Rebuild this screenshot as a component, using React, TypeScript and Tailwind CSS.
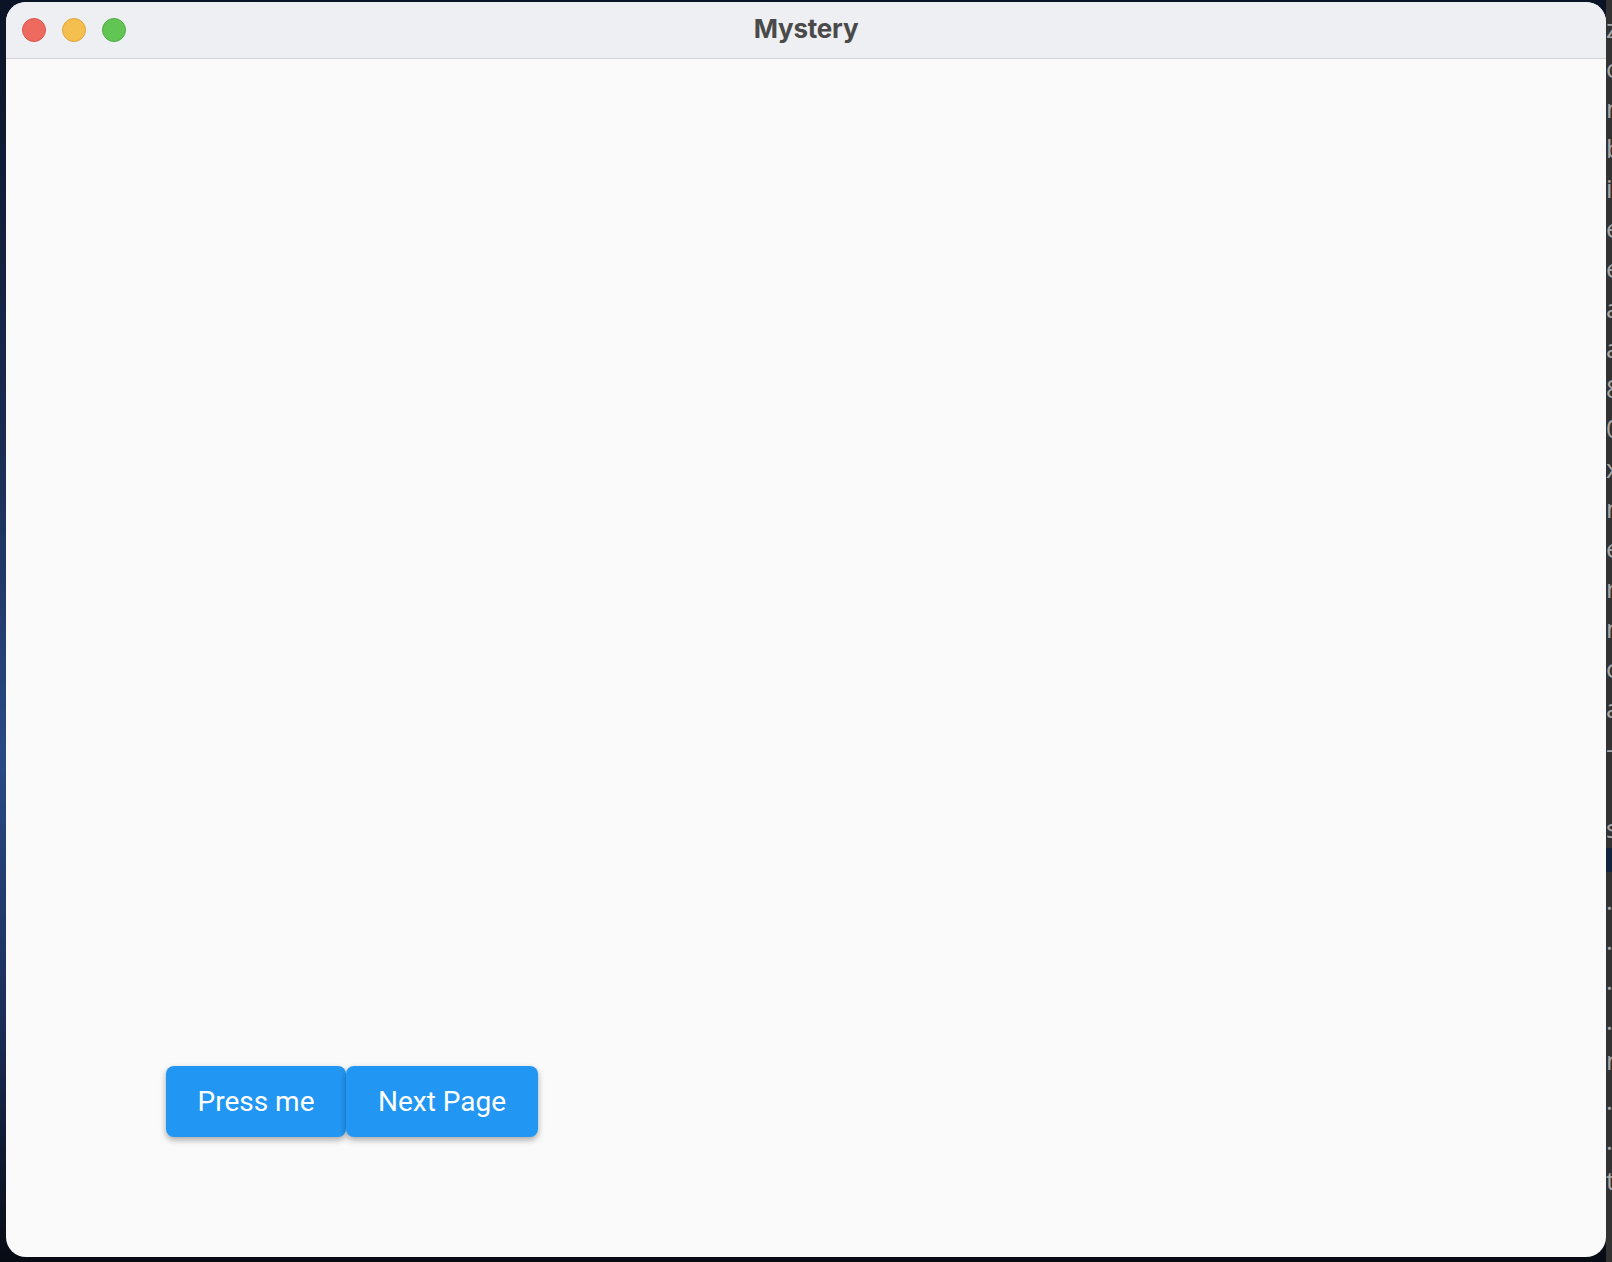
import React from "react";

const sideLetters = ["z", "o", "n", "b", "i", "e", "e", "a", "a", "8", "0", "x", "n", "e", "r", "n", "c", "a", "–", "", "s"];
const lowerLetters = [".", ".", ".", ".", "n", ".", ".", "t"];

const TrafficLight: React.FC<{ color: string }> = ({ color }) => (
  <div className={`w-[24px] h-[24px] rounded-full border ${color}`} />
);

const MysteryButton: React.FC<{ label: string; width: string }> = ({ label, width }) => (
  <button className={`h-[71px] ${width} rounded-[8px] bg-[#2196f3] text-white text-[28px] font-['Roboto',sans-serif] shadow-[0_3px_6px_rgba(0,0,0,0.33)]`}>
    {label}
  </button>
);

const App: React.FC = () => {
  return (
    <div className="w-[1612px] h-[1262px] overflow-hidden flex bg-[linear-gradient(180deg,#0b1426_0%,#1a2c52_35%,#2a4a86_60%,#1c2f5a_80%,#070b14_100%)]">
      <div className="w-[6px]" />
      <div className="w-[1600px] pt-[2px] pb-[5px] flex flex-col">
        <div className="flex-1 flex flex-col rounded-[20px] overflow-hidden bg-[#fafafa]">
          {/* title bar */}
          <div className="h-[57px] relative flex items-center justify-center bg-[#eeeff2] border-b border-[#d4d4d7]">
            <div className="absolute left-[16px] top-[16px] flex gap-[16px]">
              <TrafficLight color="bg-[#ee6a5f] border-[#d9574c]" />
              <TrafficLight color="bg-[#f5bf4f] border-[#dca63c]" />
              <TrafficLight color="bg-[#61c554] border-[#4fae43]" />
            </div>
            <span className="pb-[3px] text-[26px] font-bold text-[#4a4a4a] font-['Inter',sans-serif] tracking-[-0.2px]">Mystery</span>
          </div>
          {/* content */}
          <div className="flex-1 flex flex-col justify-end pl-[160px] pb-[120px]">
            <div className="flex">
              <MysteryButton label="Press me" width="w-[180px]" />
              <MysteryButton label="Next Page" width="w-[192px]" />
            </div>
          </div>
        </div>
      </div>
      <div className="w-[6px] bg-[#323232] overflow-hidden flex flex-col">
        <div className="flex flex-col pt-[8px] text-[26px] leading-[40px] text-[#a8a8a8] font-['Open_Sans',sans-serif]">
          {sideLetters.map((l, i) => (
            <span key={i} className="h-[40px]">{l}</span>
          ))}
        </div>
        <div className="h-[24px] bg-[#13233d]" />
        <div className="flex flex-col pt-[8px] text-[26px] leading-[40px] text-[#a8a8a8] font-['Open_Sans',sans-serif]">
          {lowerLetters.map((l, i) => (
            <span key={i} className="h-[40px]">{l}</span>
          ))}
        </div>
      </div>
    </div>
  );
};

export default App;
